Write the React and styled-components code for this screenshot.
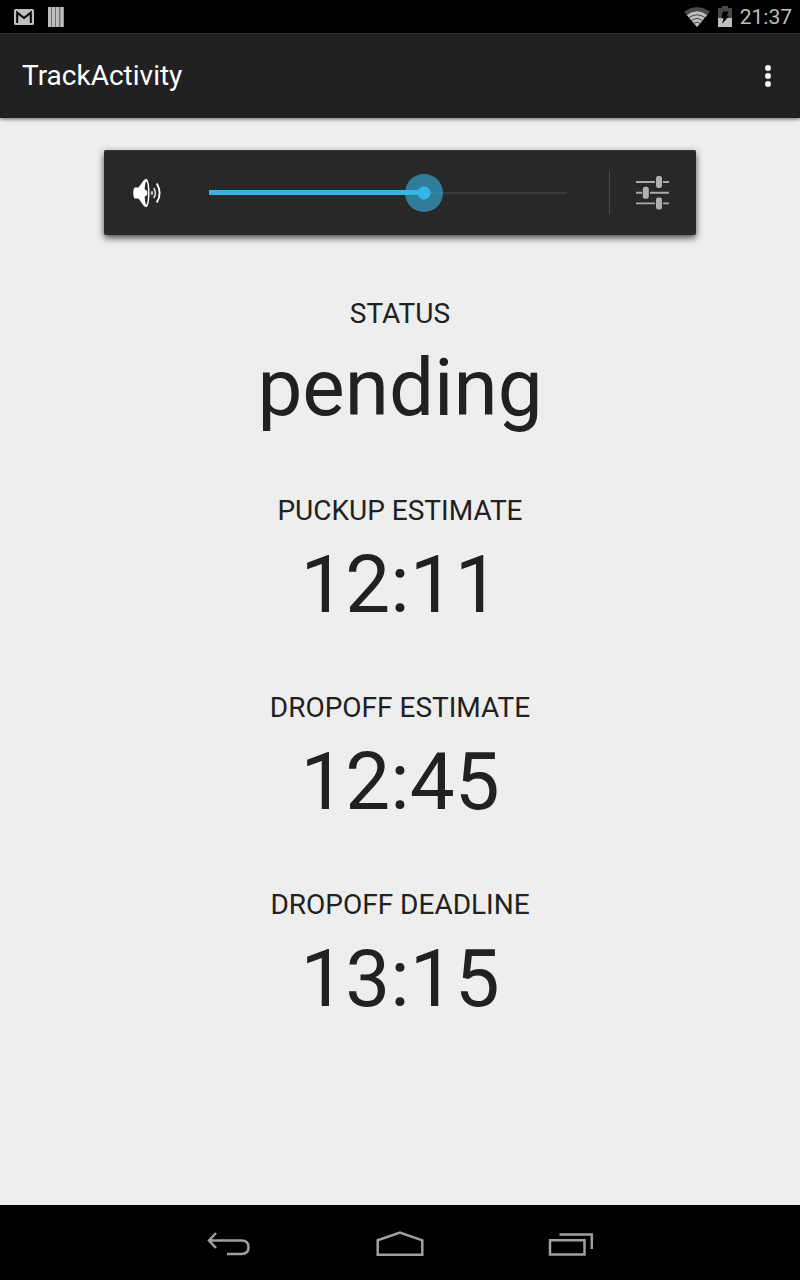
import React, { useState } from "react";
import styled, { createGlobalStyle } from "styled-components";

const estimates = [
  { id: "status", label: "Status", value: "pending" },
  { id: "pickup", label: "Puckup estimate", value: "12:11" },
  { id: "dropoff", label: "Dropoff estimate", value: "12:45" },
  { id: "deadline", label: "Dropoff deadline", value: "13:15" },
];

const GmailIcon = () => (
  <svg width="20" height="16" viewBox="0 0 20 16" aria-hidden="true">
    <rect width="20" height="16" rx="1.5" fill="#bebebe" />
    <path
      d="M3.2 14V3.6L10 9l6.8-5.400V14"
      fill="none"
      stroke="#000"
      strokeWidth="2"
    />
  </svg>
);

const BarsIcon = () => (
  <svg width="16" height="20" viewBox="0 0 16 20" aria-hidden="true">
    <rect width="16" height="20" fill="#707070" />
    <path d="M1.5 0v20M5.5 0v20M9.5 0v20M14 0v20" stroke="#bebebe" strokeWidth="3" />
  </svg>
);

const WifiIcon = () => (
  <svg width="26" height="20" viewBox="0 0 26 20" aria-hidden="true">
    <path d="M0 4.5Q13-4.200 26 4.500L13 20z" fill="#4a4a4a" />
    <path d="M2.800 7.900Q13 .8 23.200 7.900L13 20z" fill="#bebebe" />
    <path
      d="M5 10.600Q13 5 21 10.600M7.400 13.600Q13 9.400 18.600 13.600M9.600 16.400Q13 14 16.400 16.400"
      fill="none"
      stroke="#444"
      strokeWidth="1"
    />
  </svg>
);

const BatteryIcon = () => (
  <svg width="14" height="21" viewBox="0 0 14 21" aria-hidden="true">
    <path d="M4 0h6v2h4v10H0V2h4z" fill="#4a4a4a" />
    <path d="M0 12h14v9H0z" fill="#bebebe" />
    <path d="M4.800 5.500h6L8.800 9.800h2.400L4.200 17.800l1.400-5.600H3.200z" fill="#000" />
  </svg>
);

const OverflowIcon = () => (
  <svg width="6" height="22" viewBox="0 0 6 22" fill="#fff" aria-hidden="true">
    <circle cx="3" cy="3" r="2.900" />
    <circle cx="3" cy="11" r="2.900" />
    <circle cx="3" cy="19" r="2.900" />
  </svg>
);

const SpeakerIcon = () => (
  <svg width="28" height="30" viewBox="0 0 28 30" aria-hidden="true">
    <path
      d="M1.500 9.500h4L10.500 2.500Q11.800.8 13.500.8c2 1.400 3 7 3 14.200s-1 12.800-3 14.200q-1.700 0-3-1.700L5.500 20.500h-4Q.2 18.500.2 15t1.300-5.500z"
      fill="#fff"
    />
    <ellipse cx="13.300" cy="15" rx="1.700" ry="11.500" fill="#282828" />
    <path d="M11 11.200q3.400.8 3.400 3.800T11 18.800z" fill="#fff" />
    <path d="M18.600 13.200q1 1.800 0 3.600" fill="none" stroke="#ddd" strokeWidth="1.800" />
    <path d="M20.800 10q3 5 0 10" fill="none" stroke="#ddd" strokeWidth="1.600" />
    <path d="M23.800 5.500q5.600 9.500 0 19" fill="none" stroke="#fff" strokeWidth="1.900" />
  </svg>
);

const MixerIcon = () => (
  <svg width="34" height="34" viewBox="0 0 34 34" aria-hidden="true">
    <path
      d="M0 6h19M27 6h6M0 16.700h6M14 16.700H33M0 27.400h19M27 27.400h6"
      stroke="#aaa"
      strokeWidth="1.900"
    />
    <g fill="#b0b0b0">
      <rect x="20" y="0" width="6" height="12" rx="2.200" />
      <rect x="6.800" y="10.700" width="6" height="12" rx="2.200" />
      <rect x="20" y="21.400" width="6" height="12" rx="2.200" />
    </g>
  </svg>
);

const BackIcon = () => (
  <svg width="44" height="26" viewBox="0 0 44 26" aria-hidden="true">
    <path
      d="M2 9.500h32.500q7 0 7 6.700t-7 6.700H20M9 2L2 9.500 9 17"
      fill="none"
      stroke="#a0a0a0"
      strokeWidth="2.500"
    />
  </svg>
);

const HomeIcon = () => (
  <svg width="48" height="26" viewBox="0 0 48 26" aria-hidden="true">
    <path
      d="M1.700 9.300L24 1.500l22.300 7.800v14.400H1.700z"
      fill="none"
      stroke="#a0a0a0"
      strokeWidth="2.500"
    />
  </svg>
);

const RecentsIcon = () => (
  <svg width="46" height="26" viewBox="0 0 46 26" aria-hidden="true">
    <path
      d="M2 9.200h34.500v14.300H2zM11.500 3.500h32.300V18"
      fill="none"
      stroke="#a0a0a0"
      strokeWidth="2.500"
    />
  </svg>
);

const App = () => {
  const [volume, setVolume] = useState(9);

  return (
    <Wrapper>
      <GlobalStyle />
      <StatusBar>
        <Notifications>
          <GmailIcon />
          <BarsIcon />
        </Notifications>
        <SystemIcons>
          <WifiIcon />
          <BatteryIcon />
          <Clock>21:37</Clock>
        </SystemIcons>
      </StatusBar>
      <ActionBar>
        <Title>TrackActivity</Title>
        <IconButton $width={64} aria-label="More options">
          <OverflowIcon />
        </IconButton>
      </ActionBar>
      <Content>
        <VolumePanel>
          <IconButton $width={86} aria-label="Mute">
            <SpeakerIcon />
          </IconButton>
          <VolumeSlider
            type="range"
            min="0"
            max="15"
            value={volume}
            aria-label="Volume"
            style={{ "--level": `${(volume / 15) * 100}%` }}
            onChange={(e) => setVolume(Number(e.target.value))}
          />
          <Divider />
          <IconButton $width={86} aria-label="Volume settings">
            <MixerIcon />
          </IconButton>
        </VolumePanel>
        <Estimates>
          {estimates.map((item) => {
            return (
              <Estimate key={item.id}>
                <Label>{item.label}</Label>
                <Value>{item.value}</Value>
              </Estimate>
            );
          })}
        </Estimates>
      </Content>
      <NavBar>
        <IconButton $width={171} aria-label="Back">
          <BackIcon />
        </IconButton>
        <IconButton $width={171} aria-label="Home">
          <HomeIcon />
        </IconButton>
        <IconButton $width={171} aria-label="Recent apps">
          <RecentsIcon />
        </IconButton>
      </NavBar>
    </Wrapper>
  );
};

const GlobalStyle = createGlobalStyle`
  * {
    box-sizing: border-box;
  }
  body {
    margin: 0;
    background: #eee;
    font-family: Roboto, "Noto Sans", sans-serif;
  }
`;

const Wrapper = styled.div`
  display: flex;
  flex-direction: column;
  min-height: 100vh;
  color: #212121;
`;

const StatusBar = styled.div`
  display: flex;
  align-items: center;
  justify-content: space-between;
  height: 33px;
  padding: 0 8px 0 14px;
  background: #000;
`;

const Notifications = styled.div`
  display: flex;
  align-items: center;
  gap: 14px;
`;

const SystemIcons = styled.div`
  display: flex;
  align-items: center;
  gap: 8px;
`;

const Clock = styled.span`
  color: #bebebe;
  font-size: 21px;
  line-height: 32px;
`;

const ActionBar = styled.header`
  display: flex;
  align-items: center;
  justify-content: space-between;
  height: 85px;
  padding-left: 22px;
  border-top: 1px solid #2e2e2e;
  background: #212121;
  box-shadow: 0 1px 4px rgba(0, 0, 0, 0.6);
`;

const Title = styled.h1`
  margin: 0;
  color: #fff;
  font-size: 28px;
  font-weight: 400;
  line-height: 32px;
`;

const IconButton = styled.button`
  display: flex;
  align-items: center;
  justify-content: center;
  flex: 0 1 ${(props) => props.$width}px;
  align-self: stretch;
  padding: 0;
  border: 0;
  background: transparent;
  cursor: pointer;
`;

const Content = styled.main`
  display: flex;
  flex: 1;
  flex-direction: column;
  align-items: center;
  padding: 32px 0;
`;

const VolumePanel = styled.section`
  display: flex;
  align-items: center;
  width: 74%;
  height: 85px;
  border-radius: 2px;
  background: #282828;
  box-shadow:
    inset 0 1px 0 #3a3a3a,
    0 3px 7px rgba(0, 0, 0, 0.7);
`;

const VolumeSlider = styled.input`
  flex: 1;
  min-width: 0;
  height: 39px;
  margin: 0;
  appearance: none;
  background:
    linear-gradient(#33b5e5, #33b5e5) 0 50% / var(--level) 5px no-repeat
      content-box,
    linear-gradient(#3a3a3a, #3a3a3a) 0 50% / 100% 2px no-repeat content-box;
  padding: 0 19px;
  cursor: pointer;

  &::-webkit-slider-runnable-track {
    height: 38px;
    margin: 0 -19px;
  }
  &::-webkit-slider-thumb {
    appearance: none;
    width: 38px;
    height: 38px;
    border-radius: 50%;
    background: radial-gradient(
      circle,
      #33b5e5 6px,
      rgba(51, 181, 229, 0.6) 7px
    );
  }
`;

const Divider = styled.div`
  width: 1px;
  height: 43px;
  margin-left: 23px;
  background: #4a4a4a;
`;

const Estimates = styled.dl`
  display: flex;
  flex-direction: column;
  gap: 59px;
  margin: 63px 0 0;
  text-align: center;
`;

const Estimate = styled.div`
  display: flex;
  flex-direction: column;
`;

const Label = styled.dt`
  font-size: 28px;
  line-height: 32px;
  text-transform: uppercase;
`;

const Value = styled.dd`
  margin: 10px 0 0;
  font-size: 80px;
  line-height: 96px;
`;

const NavBar = styled.nav`
  display: flex;
  justify-content: center;
  height: 75px;
  padding-top: 2px;
  background: #000;
`;

export default App;
